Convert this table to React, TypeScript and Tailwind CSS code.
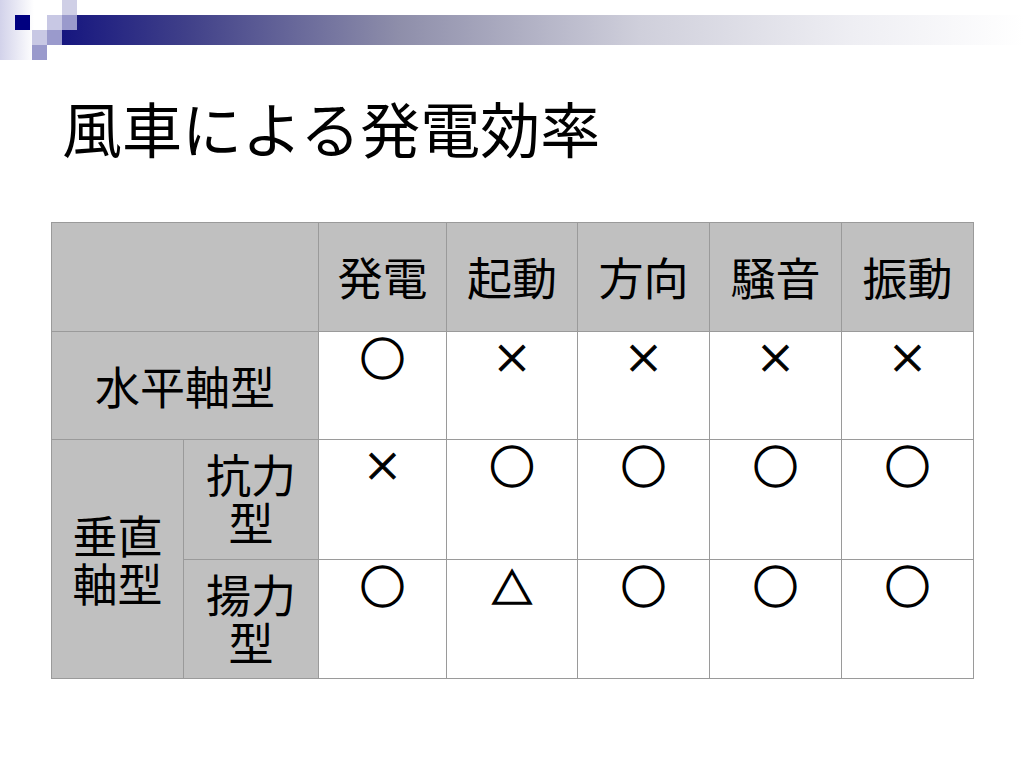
import React from "react";

const JP = "font-['Noto_Sans_CJK_JP','Noto_Sans',sans-serif]";

const header = ["発電", "起動", "方向", "騒音", "振動"];

const rows: { key: string; marks: string[] }[] = [
  { key: "horizontal", marks: ["○", "×", "×", "×", "×"] },
  { key: "drag", marks: ["×", "○", "○", "○", "○"] },
  { key: "lift", marks: ["○", "△", "○", "○", "○"] },
];

function Decoration() {
  return (
    <svg width="1024" height="60" viewBox="0 0 1024 60" className="block">
      <defs>
        <linearGradient id="bar" gradientUnits="userSpaceOnUse" x1="62" y1="0" x2="1024" y2="0">
          <stop offset="0" stopColor="#16167f" />
          <stop offset="0.13" stopColor="#404089" />
          <stop offset="0.35" stopColor="#8e8eaa" />
          <stop offset="0.6" stopColor="#cfcfdb" />
          <stop offset="0.82" stopColor="#eeeef3" />
          <stop offset="1" stopColor="#ffffff" />
        </linearGradient>
        <linearGradient id="fade" x1="0" y1="0" x2="1" y2="0">
          <stop offset="0" stopColor="#d2d2ea" />
          <stop offset="1" stopColor="#ffffff" />
        </linearGradient>
      </defs>
      <rect x="0" y="0" width="34" height="60" fill="url(#fade)" />
      <rect x="62" y="15" width="962" height="30" fill="url(#bar)" />
      <rect x="15" y="15" width="15" height="15" fill="#000080" />
      <rect x="62" y="0" width="15" height="15" fill="#cfcfe6" />
      <rect x="47" y="15" width="15" height="15" fill="#c8c8e4" />
      <rect x="62" y="15" width="15" height="15" fill="#9a9acc" />
      <rect x="32" y="30" width="15" height="15" fill="#c8c8e4" />
      <rect x="47" y="30" width="15" height="15" fill="#9a9acc" />
      <rect x="32" y="45" width="15" height="15" fill="#9a9acc" />
    </svg>
  );
}

function Mark({ m }: { m: string }) {
  if (m === "×") {
    return (
      <span className="relative -top-[3px] inline-block text-[40px] leading-[48px] [-webkit-text-stroke:1px_#000]">
        ×
      </span>
    );
  }
  if (m === "△") {
    return (
      <span className="inline-block text-[41px] leading-[48px] [-webkit-text-stroke:1.6px_#000]">
        △
      </span>
    );
  }
  return <span className="[-webkit-text-stroke:1.6px_#000]">{m}</span>;
}

export default function App() {
  const cell = "border border-[#9a9a9a] text-center align-top pt-[1px] px-2";
  const grey = "border border-[#9a9a9a] bg-[#c0c0c0] text-center align-middle px-2";

  return (
    <div className={`w-[1024px] h-[768px] bg-white text-black overflow-hidden ${JP}`}>
      <Decoration />

      <h1 className="ml-[62px] mt-[37px] text-[60px] leading-[60px] font-normal">
        風車による発電効率
      </h1>

      <table className="ml-[51px] mt-[65px] border-collapse table-fixed w-[922px] text-[45px] leading-[48px]">
        <colgroup>
          <col className="w-[132px]" />
          <col className="w-[135px]" />
          <col className="w-[128px]" />
          <col className="w-[131px]" />
          <col className="w-[132px]" />
          <col className="w-[132px]" />
          <col className="w-[132px]" />
        </colgroup>
        <tbody>
          <tr className="h-[109px]">
            <td colSpan={2} className={grey}></td>
            {header.map((h) => (
              <td key={h} className={grey}>
                {h}
              </td>
            ))}
          </tr>
          <tr className="h-[108px]">
            <td colSpan={2} className={grey}>
              水平軸型
            </td>
            {rows[0].marks.map((m, i) => (
              <td key={i} className={cell}>
                <Mark m={m} />
              </td>
            ))}
          </tr>
          <tr className="h-[120px]">
            <td rowSpan={2} className={grey}>
              垂直軸型
            </td>
            <td className={`${grey} !align-top pt-[10px]`}>抗力型</td>
            {rows[1].marks.map((m, i) => (
              <td key={i} className={cell}>
                <Mark m={m} />
              </td>
            ))}
          </tr>
          <tr className="h-[119px]">
            <td className={`${grey} !align-top pt-[10px]`}>揚力型</td>
            {rows[2].marks.map((m, i) => (
              <td key={i} className={cell}>
                <Mark m={m} />
              </td>
            ))}
          </tr>
        </tbody>
      </table>
    </div>
  );
}
